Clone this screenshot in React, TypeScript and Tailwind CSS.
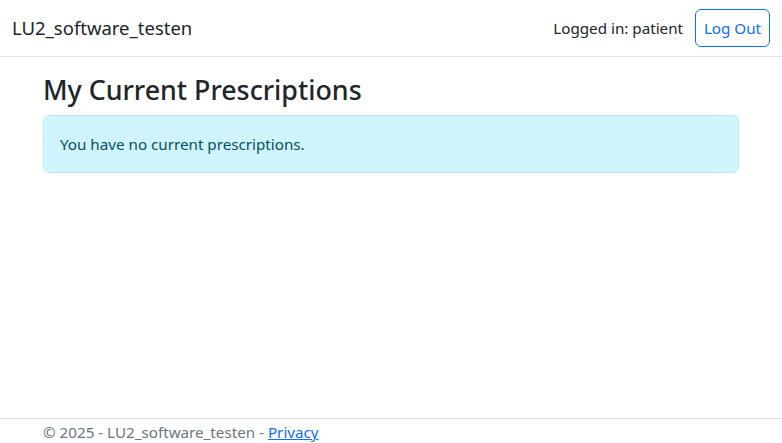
import React from "react";

export default function App() {
  return (
    <div
      className="h-[443px] w-full flex flex-col bg-white text-[#212529] overflow-hidden"
      style={{ fontFamily: '"Noto Sans", "Open Sans", sans-serif' }}
    >
      <header className="h-[57px] shrink-0 border-b border-[#e5e5e5] flex items-center justify-between pl-3 pr-3">
        <span className="text-[18.5px] leading-[30px] text-[#212529]">LU2_software_testen</span>
        <div className="flex items-center gap-3">
          <span className="text-[15.2px] leading-6">Logged in: patient</span>
          <button className="h-[38px] w-[75px] border border-[#0d6efd] rounded-[6px] text-[#0d6efd] text-[15.2px] leading-6">
            Log Out
          </button>
        </div>
      </header>
      <main className="flex-1 pt-4">
        <div className="w-[720px] mx-auto px-3">
          <h1 className="text-[26.8px] leading-[34px] font-medium mb-2">My Current Prescriptions</h1>
          <div className="bg-[#cff4fc] border border-[#b6effb] rounded-[6px] p-4 text-[#055160] text-[15.2px] leading-6">
            You have no current prescriptions.
          </div>
        </div>
      </main>
      <footer className="shrink-0 border-t border-[#dee2e6] h-[25px]">
        <div className="w-[720px] mx-auto px-3 text-[15.2px] leading-6 text-[#6c757d] pt-[1px] whitespace-nowrap">
          © 2025 - LU2_software_testen - <a href="#" className="text-[#0d6efd] underline">Privacy</a>
        </div>
      </footer>
    </div>
  );
}
